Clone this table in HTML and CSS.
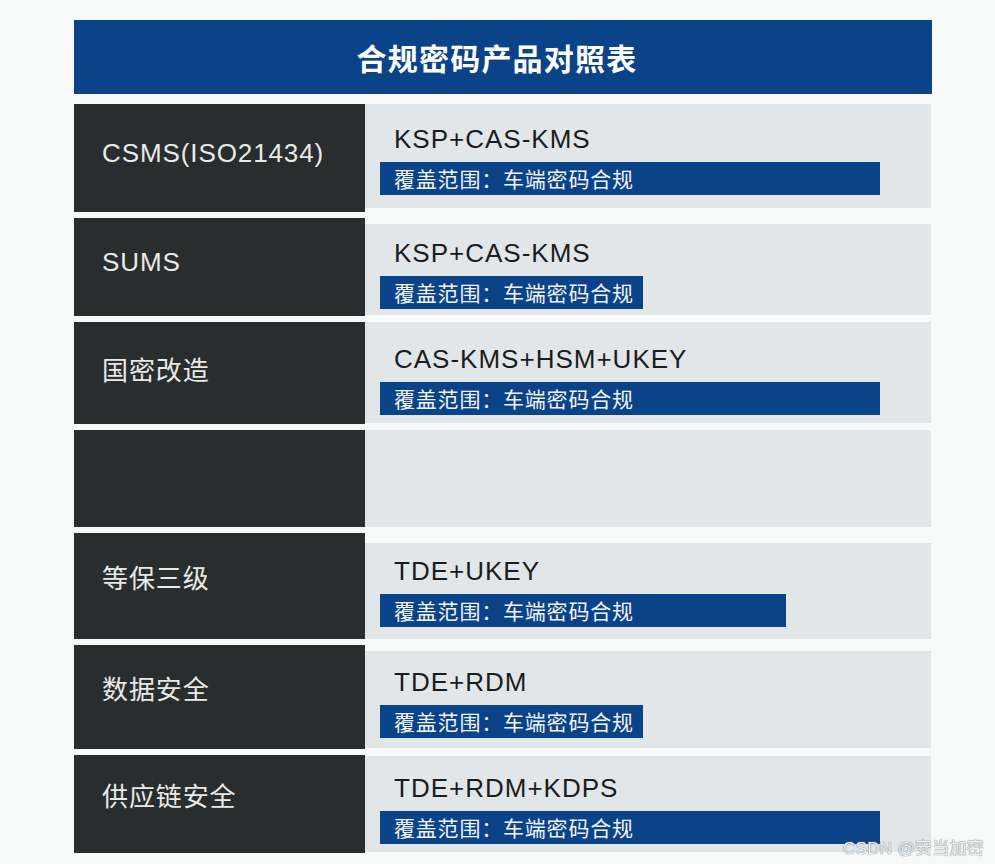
FILE: index.html
```html
<!DOCTYPE html>
<html lang="zh-CN">
<head>
<meta charset="utf-8">
<title>合规密码产品对照表</title>
<link rel="stylesheet" href="styles.css">
</head>
<body>
<main class="sheet">
  <header class="sheet-title">合规密码产品对照表</header>
  <section class="rows">
    <div class="row row-1">
      <div class="label">CSMS(ISO21434)</div>
      <div class="detail detail-1">
        <div class="product">KSP+CAS-KMS</div>
        <div class="scope scope-long">覆盖范围：车端密码合规</div>
      </div>
    </div>
    <div class="row row-2">
      <div class="label">SUMS</div>
      <div class="detail detail-2">
        <div class="product">KSP+CAS-KMS</div>
        <div class="scope scope-short">覆盖范围：车端密码合规</div>
      </div>
    </div>
    <div class="row row-3">
      <div class="label">国密改造</div>
      <div class="detail detail-3">
        <div class="product">CAS-KMS+HSM+UKEY</div>
        <div class="scope scope-long">覆盖范围：车端密码合规</div>
      </div>
    </div>
    <div class="row row-4">
      <div class="label"></div>
      <div class="detail"></div>
    </div>
    <div class="row row-5">
      <div class="label label-high">等保三级</div>
      <div class="detail detail-5">
        <div class="product">TDE+UKEY</div>
        <div class="scope scope-mid">覆盖范围：车端密码合规</div>
      </div>
    </div>
    <div class="row row-6">
      <div class="label label-high">数据安全</div>
      <div class="detail detail-6">
        <div class="product">TDE+RDM</div>
        <div class="scope scope-short">覆盖范围：车端密码合规</div>
      </div>
    </div>
    <div class="row row-7">
      <div class="label label-high">供应链安全</div>
      <div class="detail detail-7">
        <div class="product">TDE+RDM+KDPS</div>
        <div class="scope scope-long">覆盖范围：车端密码合规</div>
      </div>
    </div>
  </section>
</main>
<div class="watermark">CSDN @安当加密</div>
</body>
</html>
```
FILE: styles.css
```css
* { box-sizing: border-box; }

html, body {
  margin: 0;
  padding: 0;
}

body {
  background: #f8f9f9;
  width: 995px;
  height: 864px;
  position: relative;
  overflow: hidden;
  font-family: "Liberation Sans", "Noto Sans CJK SC", sans-serif;
}

.sheet {
  width: 858px;
  margin: 20px 0 0 74px;
  display: flex;
  flex-direction: column;
  gap: 10px;
}

.sheet-title {
  height: 74px;
  background: #0b4389;
  color: #ffffff;
  font-family: "Noto Sans CJK SC", sans-serif;
  font-weight: 700;
  font-size: 30px;
  letter-spacing: 1.2px;
  display: flex;
  align-items: center;
  justify-content: center;
  padding: 0 12px 0 0;
}

.rows {
  display: flex;
  flex-direction: column;
  gap: 6px;
}

.row {
  display: flex;
  width: 857px;
}

.row-1 { height: 108px; }
.row-2 { height: 98px; }
.row-3 { height: 102px; }
.row-4 { height: 97px; }
.row-5 { height: 106px; }
.row-6 { height: 104px; }
.row-7 { height: 98px; }

.label {
  width: 291px;
  flex: none;
  background: #2a2d2e;
  color: #e9e9e7;
  font-family: "Liberation Sans", "Noto Sans CJK SC", sans-serif;
  font-size: 26px;
  letter-spacing: 0.9px;
  display: flex;
  align-items: center;
  padding: 0 0 10px 28px;
}

.label-high { padding-bottom: 20px; }

.detail {
  flex: 1;
  background: #e1e6e8;
  display: flex;
  flex-direction: column;
  justify-content: center;
  padding: 7px 0 0 15px;
}

.detail-1 { margin-bottom: 4px; }
.detail-2 { margin-top: 6px; margin-bottom: 1px; }
.detail-3 { margin-bottom: 1px; padding-top: 13px; }
.detail-5 { margin-top: 10px; padding-top: 0; }
.detail-6 { margin-top: 6px; margin-bottom: 1px; padding-top: 5px; }
.detail-7 { margin-top: 1px; margin-bottom: 1px; padding-top: 9px; }

.product {
  color: #1b1c1d;
  font-size: 26px;
  line-height: 30px;
  letter-spacing: 1px;
  padding-left: 14px;
  margin-bottom: 8px;
}

.scope {
  height: 33px;
  background: #0b4389;
  color: #f1f3f6;
  font-family: "Noto Sans CJK SC", sans-serif;
  font-size: 21px;
  line-height: 33px;
  letter-spacing: 0.8px;
  padding-left: 14px;
  white-space: nowrap;
}

.scope-long { width: 500px; }
.scope-mid { width: 406px; }
.scope-short { width: 263px; }

.watermark {
  position: absolute;
  left: 843px;
  top: 834px;
  font-family: "Liberation Sans", "Noto Sans CJK SC", sans-serif;
  font-size: 17px;
  letter-spacing: 0.3px;
  color: #eef0f2;
  text-shadow: 0 0 1px #7d8288, 0 0 1px #7d8288;
  white-space: nowrap;
}
```
